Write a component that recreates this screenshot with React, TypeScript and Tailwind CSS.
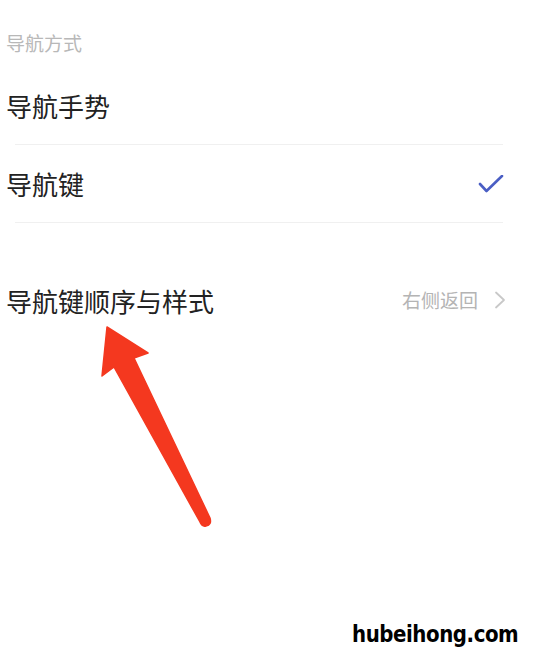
import React from "react";

export default function App() {
  return (
    <div
      className="relative w-[542px] h-[657px] bg-white overflow-hidden"
      style={{ fontFamily: '"Noto Sans CJK SC", "Noto Sans", sans-serif' }}
    >
      <div className="flex flex-col">
        <div className="pt-[31px] pb-[11px] pl-[6px] text-[19px] leading-[24px] text-[#b8b8b8]">
          导航方式
        </div>
        <div className="h-[78px] flex items-center pl-[6px] text-[26px] text-[#222]">
          导航手势
        </div>
        <div className="h-px ml-[15px] mr-[39px] bg-[#f0f0f0]" />
        <div className="h-[77px] flex items-center justify-between pl-[6px] pr-[38px] text-[26px] text-[#222]">
          <span>导航键</span>
          <svg width="26" height="20" viewBox="0 0 26 20" className="mt-[2px]">
            <path
              d="M2 9 L8.5 16 L24 1"
              fill="none"
              stroke="#4a5ec4"
              strokeWidth="2.6"
              strokeLinecap="round"
              strokeLinejoin="round"
            />
          </svg>
        </div>
        <div className="h-px ml-[15px] mr-[39px] bg-[#f0f0f0]" />
        <div className="h-[39px]" />
        <div className="h-[76px] flex items-center justify-between pl-[6px] pr-[36px]">
          <span className="text-[26px] text-[#222]">导航键顺序与样式</span>
          <div className="flex items-center gap-[16px]">
            <span className="text-[19px] text-[#b4b4b4]">右侧返回</span>
            <svg width="12" height="18" viewBox="0 0 12 18">
              <path
                d="M2 1.5 L10 9 L2 16.5"
                fill="none"
                stroke="#c8c8c8"
                strokeWidth="1.8"
                strokeLinecap="round"
                strokeLinejoin="round"
              />
            </svg>
          </div>
        </div>
      </div>

      <svg
        className="absolute inset-0 pointer-events-none"
        width="542"
        height="657"
        viewBox="0 0 542 657"
      >
        <path
          d="M107 327 L148 353 L134 358 L210 518 Q212 525 206 526 Q202 527 200 522 L114 367 L102 376 Z"
          fill="#f4381f"
          stroke="#f4381f"
          strokeWidth="1.5"
          strokeLinejoin="round"
        />
      </svg>

      <div
        className="absolute left-[352px] top-[617px] text-[23px] font-bold text-black tracking-[-0.5px] origin-left scale-x-[0.86]"
        style={{ fontFamily: '"DejaVu Sans", sans-serif' }}
      >
        hubeihong.com
      </div>
    </div>
  );
}
